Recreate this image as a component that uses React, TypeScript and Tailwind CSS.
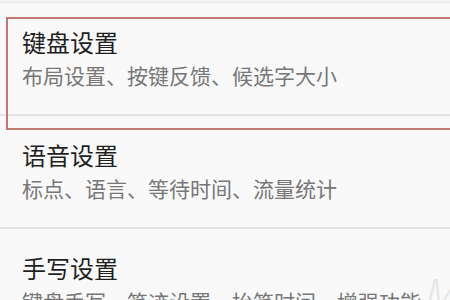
const items = [
  { title: '键盘设置', desc: '布局设置、按键反馈、候选字大小' },
  { title: '语音设置', desc: '标点、语言、等待时间、流量统计' },
  { title: '手写设置', desc: '键盘手写、笔迹设置、抬笔时间、增强功能' },
]

export default function App() {
  return (
    <div
      className="relative w-[450px] h-[300px] overflow-hidden bg-[#f9f9f9]"
      style={{ fontFamily: '"Noto Sans CJK SC", "Noto Sans", sans-serif' }}
    >
      <div className="h-[3px] bg-[#f2f2f2] border-b border-[#e6e6e6]" />
      <div className="flex flex-col">
        {items.map((item) => (
          <div key={item.title} className="h-[113px] pl-[22px] pt-[24px] border-b-2 border-[#e4e4e4] shrink-0">
            <div className="text-[24px] leading-[30px] text-[#1f1f1f]">{item.title}</div>
            <div className="mt-[3px] text-[21px] leading-[30px] text-[#777777] whitespace-nowrap">
              {item.desc}
            </div>
          </div>
        ))}
      </div>
      {/* red highlight box */}
      <div className="absolute left-[6px] top-[17px] w-[460px] h-[113px] border-2 border-[#c07a72]" />
      {/* watermark */}
      <div className="absolute right-[-6px] bottom-[-14px] text-[44px] italic font-light text-[#e6e6e6] leading-none">
        M
      </div>
    </div>
  )
}
